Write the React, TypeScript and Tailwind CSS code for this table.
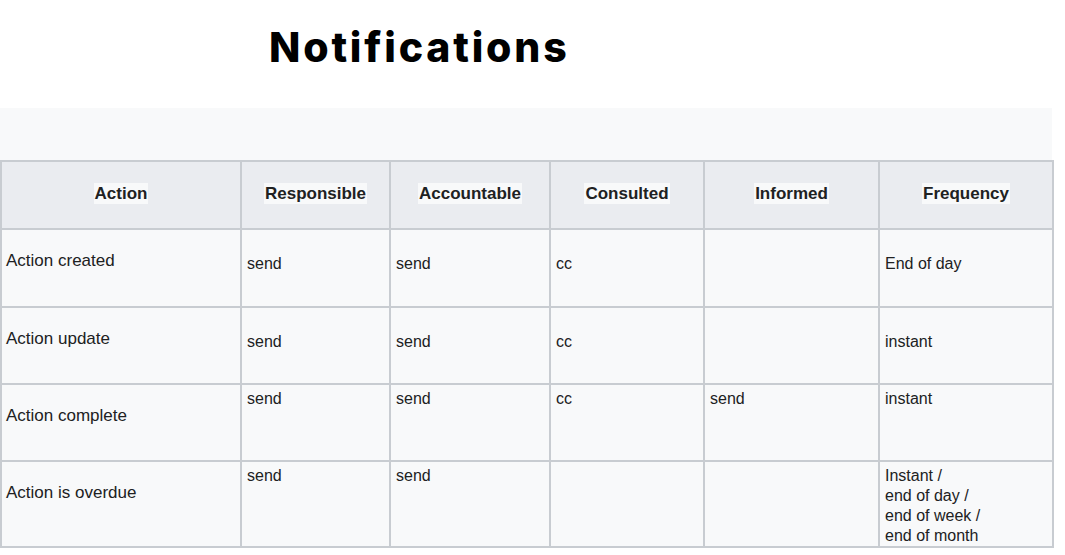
import React from "react";

const headers = ["Action", "Responsible", "Accountable", "Consulted", "Informed", "Frequency"];
const widths = ["w-[240px]", "w-[149px]", "w-[160px]", "w-[154px]", "w-[175px]", "w-[174px]"];

type Row = { h: string; first: string; firstPt: string; pt: string; cells: (string | string[])[] };

const rows: Row[] = [
  { h: "h-[78px]", first: "Action created", firstPt: "pt-[21px]", pt: "pt-[24px]", cells: ["send", "send", "cc", "", "End of day"] },
  { h: "h-[77px]", first: "Action update", firstPt: "pt-[21px]", pt: "pt-[24px]", cells: ["send", "send", "cc", "", "instant"] },
  { h: "h-[77px]", first: "Action complete", firstPt: "pt-[21px]", pt: "pt-[4px]", cells: ["send", "send", "cc", "send", "instant"] },
  {
    h: "h-[86px]",
    first: "Action is overdue",
    firstPt: "pt-[21px]",
    pt: "pt-[4px]",
    cells: ["send", "send", "", "", ["Instant /", "end of day /", "end of week /", "end of month"]],
  },
];

export default function App() {
  return (
    <div className="w-[1065px] h-[555px] bg-white overflow-hidden text-[#202122]" style={{ fontFamily: '"Liberation Sans", Arial, sans-serif' }}>
      <div className="h-[108px] pl-[269px] pt-[19px]">
        <h1
          className="text-[41px] leading-[56px] font-extrabold text-black tracking-[2.8px]"
          style={{ fontFamily: 'Inter, "Noto Sans", sans-serif' }}
        >
          Notifications
        </h1>
      </div>
      <div className="w-[1052px] bg-[#f8f9fa]">
        <div className="h-[52px]" />
        <table className="border-collapse table-fixed w-[1052px]">
          <thead>
            <tr className="h-[68px] bg-[#eaecf0]">
              {headers.map((h, i) => (
                <th key={h} className={`${widths[i]} border-2 border-[#c8ccd1] text-center align-middle p-0 pb-[2px] text-[17px] font-bold`}>
                  <span className="bg-[#f8f9fa] px-[1px] py-[1px]">{h}</span>
                </th>
              ))}
            </tr>
          </thead>
          <tbody>
            {rows.map((r) => (
              <tr key={r.first} className={r.h}>
                <td className={`border-2 border-[#c8ccd1] align-top pl-[4px] ${r.firstPt} text-[17px] leading-[20px]`}>{r.first}</td>
                {r.cells.map((c, i) => (
                  <td key={i} className={`border-2 border-[#c8ccd1] align-top pl-[5px] ${r.pt} text-[16px] leading-[20px]`}>
                    {Array.isArray(c) ? c.map((l) => <div key={l}>{l}</div>) : c}
                  </td>
                ))}
              </tr>
            ))}
          </tbody>
        </table>
      </div>
    </div>
  );
}
